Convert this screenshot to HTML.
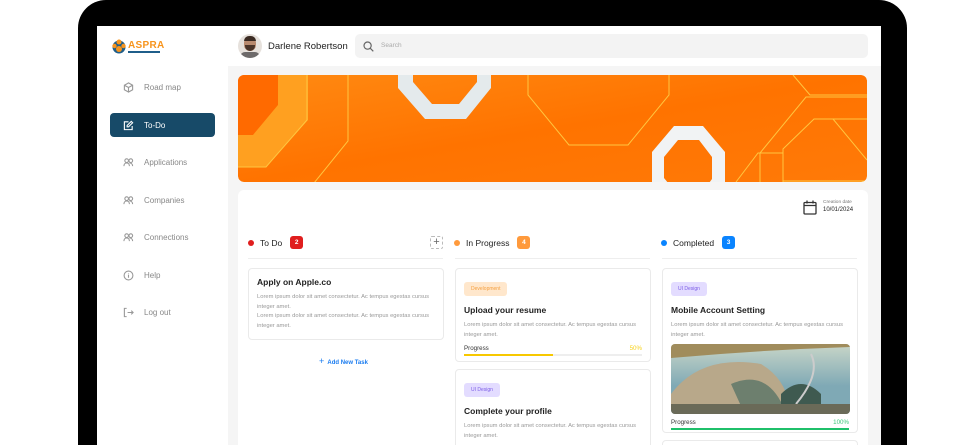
<!DOCTYPE html>
<html><head><meta charset="utf-8">
<style>
*{box-sizing:border-box;margin:0;padding:0}
html,body{width:978px;height:445px;overflow:hidden}
body{background:#fff;font-family:"Liberation Sans",sans-serif;position:relative}
.frame{position:absolute;left:78px;top:0;width:829px;height:445px;background:#000;border-radius:28px 28px 0 0}
.screen{position:absolute;left:97px;top:26px;width:784px;height:419px;background:#f5f5f5;overflow:hidden}
.side{position:absolute;left:0;top:0;width:131px;height:419px;background:#fff}
.nav{position:absolute;left:13px;width:105px;height:24px;border-radius:4px;font-size:8px;color:#888;display:flex;align-items:center;padding-left:13px}
.nav svg{width:11px;height:11px;margin-right:10px;stroke:#999;fill:none;stroke-width:1.2}
.nav.act{background:#174a68;color:#fff}
.nav.act svg{stroke:#fff}
.hdr{position:absolute;left:131px;top:0;width:653px;height:40px;background:#fff}
.board{position:absolute;left:141px;top:164px;width:630px;height:300px;background:#fff;border-radius:6px}
.colh{position:absolute;top:46px;font-size:8.5px;color:#222;display:flex;align-items:center}
.dot{width:6px;height:6px;border-radius:50%;margin-right:6px}
.badge{width:13px;height:13px;border-radius:3px;color:#fff;font-size:6.5px;display:flex;align-items:center;justify-content:center;margin-left:8px;font-weight:bold}
.line{position:absolute;top:68px;height:1px;background:#eee;width:195px}
.card{position:absolute;border:1px solid #eaeaea;border-radius:4px;background:#fff;width:196px;padding:8px}
.card h4{font-size:8.5px;color:#222;margin-bottom:6px}
.card p{font-size:5.8px;color:#999;line-height:9.6px}
.tag{display:inline-block;font-size:5px;padding:4px 7px;border-radius:3px;margin-bottom:9px}
.pg{display:flex;justify-content:space-between;font-size:6.2px;color:#333;margin-top:5px}
.bar{height:2px;background:#eee;margin-top:2px}
</style></head><body>
<div class="frame"></div>
<div class="screen">
 <div class="side">
  <svg style="position:absolute;left:14px;top:12px" width="16" height="16" viewBox="0 0 16 16"><circle cx="8" cy="9" r="6.5" fill="#1f5e8a"/><circle cx="8" cy="4" r="2.5" fill="#f7941d"/><circle cx="3.5" cy="8" r="2.2" fill="#f7941d"/><circle cx="12.5" cy="8" r="2.2" fill="#f7941d"/><circle cx="8" cy="11" r="3" fill="#f7941d"/></svg>
  <div style="position:absolute;left:31px;top:14px;font-size:10px;font-weight:bold;color:#f7941d;letter-spacing:.3px">ASPRA</div>
  <div style="position:absolute;left:31px;top:25px;width:32px;height:1.5px;background:#1f5e8a"></div>
  <div class="nav" style="top:49px"><svg viewBox="0 0 12 12"><path d="M6 1l4.5 2.5v5L6 11 1.5 8.5v-5z M1.5 3.5L6 6l4.5-2.5M6 6v5"/></svg>Road map</div>
  <div class="nav act" style="top:87px"><svg viewBox="0 0 12 12"><path d="M10 6.5V10.5H1.5V2H6M9 1.5l1.5 1.5L6 7.5H4.5V6z"/></svg>To-Do</div>
  <div class="nav" style="top:124px"><svg viewBox="0 0 12 12"><circle cx="4" cy="4" r="2"/><circle cx="8.5" cy="4" r="2"/><path d="M1 10c0-2.5 1.5-3.5 3-3.5s3 1 3 3.5M7 6.5c1.5 0 3.5.8 3.5 3.5"/></svg>Applications</div>
  <div class="nav" style="top:162px"><svg viewBox="0 0 12 12"><circle cx="4" cy="4" r="2"/><circle cx="8.5" cy="4" r="2"/><path d="M1 10c0-2.5 1.5-3.5 3-3.5s3 1 3 3.5M7 6.5c1.5 0 3.5.8 3.5 3.5"/></svg>Companies</div>
  <div class="nav" style="top:199px"><svg viewBox="0 0 12 12"><circle cx="4" cy="4" r="2"/><circle cx="8.5" cy="4" r="2"/><path d="M1 10c0-2.5 1.5-3.5 3-3.5s3 1 3 3.5M7 6.5c1.5 0 3.5.8 3.5 3.5"/></svg>Connections</div>
  <div class="nav" style="top:237px"><svg viewBox="0 0 12 12"><circle cx="6" cy="6" r="4.8"/><path d="M6 5v3.5M6 3.3v.5"/></svg>Help</div>
  <div class="nav" style="top:274px"><svg viewBox="0 0 12 12"><path d="M4 1.5H1.5v9H4M5 6h6M9 4l2 2-2 2"/></svg>Log out</div>
 </div>
 <div class="hdr">
  <div style="position:absolute;left:10px;top:8px;width:24px;height:24px;border-radius:50%;background:#e6e1dc;overflow:hidden"><div style="position:absolute;left:6px;top:3px;width:12px;height:14px;border-radius:6px;background:#b98a6e"></div><div style="position:absolute;left:6px;top:2px;width:12px;height:5px;border-radius:5px 5px 0 0;background:#3a2a22"></div><div style="position:absolute;left:7px;top:11px;width:10px;height:6px;border-radius:0 0 5px 5px;background:#4a3428"></div><div style="position:absolute;left:2px;top:18px;width:20px;height:10px;border-radius:8px;background:#6d6a6a"></div></div>
  <div style="position:absolute;left:40px;top:15px;font-size:9.5px;color:#222">Darlene Robertson</div>
  <div style="position:absolute;left:127px;top:8px;width:513px;height:24px;border-radius:5px;background:#f3f3f3"><svg style="position:absolute;left:8px;top:7px" width="11" height="11" viewBox="0 0 11 11" fill="none" stroke="#666" stroke-width="1.2"><circle cx="4.6" cy="4.6" r="3.6"/><path d="M7.3 7.3l3 3"/></svg><span style="position:absolute;left:26px;top:8px;font-size:6.5px;color:#aaa">Search</span></div>
 </div>
 <svg style="position:absolute;left:141px;top:49px;border-radius:6px" width="629" height="107" viewBox="0 0 629 107">
  <defs><linearGradient id="g" x1="0" y1="0" x2="1" y2="1"><stop offset="0" stop-color="#ff8a12"/><stop offset=".5" stop-color="#ff7300"/><stop offset="1" stop-color="#ff7a08"/></linearGradient></defs>
  <rect width="629" height="107" rx="6" fill="url(#g)"/>
  <path d="M0 0H40V30L15 60H0z" fill="#ff6a00"/>
  <path d="M40 0H70V45L28 92H0V60H15L40 30z" fill="#ffa020"/>
  <g fill="none" stroke="#ffc640" stroke-width="1">
   <path d="M69 0V45L28 92H0M110 0V66L55 134M290 0V20L331 70H390L431 20V0M555 0L572 20H629M629 22H568L522 78V107M545 107V74L576 44H629M498 107L520 78H545M545 106H629M595 44L629 85"/>
  </g>
  <path d="M160 0H253V13L228 44H187L160 13z M175 0V7L194 29H221L239 7V0z" fill="#e4eaec" fill-rule="evenodd"/>
  <path d="M436 51H465L487 77V107H414V77z M440 65L426 82V103L440 120H462L474 104V82L461 65z" fill="#f1f3f4" fill-rule="evenodd"/>
 </svg>
 <div class="board">
  <svg style="position:absolute;left:565px;top:10px" width="14" height="15" viewBox="0 0 14 15" fill="none" stroke="#333" stroke-width="1.3"><rect x="1" y="2.5" width="12" height="11.5" rx="1"/><path d="M1 5.5h12M4 0.5v3M10 0.5v3"/></svg>
  <div style="position:absolute;left:585px;top:10px;font-size:4.8px;color:#777">Creation date</div>
  <div style="position:absolute;left:585px;top:17px;font-size:6px;color:#222">10/01/2024</div>
  <div class="colh" style="left:10px"><div class="dot" style="background:#e01e1e"></div>To Do<div class="badge" style="background:#e01e1e">2</div></div>
  <div style="position:absolute;left:192px;top:46px;width:13px;height:13px;border:1px dashed #bbb;border-radius:2px;font-size:11px;color:#666;line-height:10px;text-align:center">+</div>
  <div class="colh" style="left:216px"><div class="dot" style="background:#ff9a3c"></div>In Progress<div class="badge" style="background:#ff9a3c">4</div></div>
  <div class="colh" style="left:423px"><div class="dot" style="background:#0a84ff"></div>Completed<div class="badge" style="background:#0a84ff">3</div></div>
  <div class="line" style="left:10px"></div><div class="line" style="left:217px"></div><div class="line" style="left:424px"></div>
  <div class="card" style="left:10px;top:78px;height:72px"><h4>Apply on Apple.co</h4><p>Lorem ipsum dolor sit amet consectetur. Ac tempus egestas cursus integer amet.<br>Lorem ipsum dolor sit amet consectetur. Ac tempus egestas cursus integer amet.</p></div>
  <div style="position:absolute;left:81px;top:166px;font-size:6px;color:#1a7cf0;font-weight:bold"><span style="font-size:9px;font-weight:normal">+</span>&nbsp; Add New Task</div>
  <div class="card" style="left:217px;top:78px;height:94px"><span class="tag" style="background:#ffe7cc;color:#f5a040">Development</span><h4>Upload your resume</h4><p>Lorem ipsum dolor sit amet consectetur. Ac tempus egestas cursus integer amet.</p><div class="pg"><span>Progress</span><span style="color:#f7d21c">50%</span></div><div class="bar"><div style="width:50%;height:2px;background:#f7c800"></div></div></div>
  <div class="card" style="left:217px;top:179px;height:130px"><span class="tag" style="background:#e3dcff;color:#7b5ce6">UI Design</span><h4>Complete your profile</h4><p>Lorem ipsum dolor sit amet consectetur. Ac tempus egestas cursus integer amet.</p><div style="height:20px;margin-top:5px;border-radius:4px;background:linear-gradient(90deg,#7fa0a0,#c8dcdc)"></div></div>
  <div class="card" style="left:424px;top:78px;height:165px"><span class="tag" style="background:#e3dcff;color:#7b5ce6">UI Design</span><h4>Mobile Account Setting</h4><p>Lorem ipsum dolor sit amet consectetur. Ac tempus egestas cursus integer amet.</p>
   <svg style="display:block;margin-top:4px;border-radius:4px" width="179" height="70" viewBox="0 0 179 70"><defs><linearGradient id="s" x1="0" y1="0" x2="0" y2="1"><stop offset="0" stop-color="#c9d6c8"/><stop offset=".6" stop-color="#7fa9b5"/></linearGradient></defs><rect width="179" height="70" fill="url(#s)"/><path d="M0 0H179V3Q90 6 0 14z" fill="#a08c5c"/><path d="M0 50Q30 10 90 20Q115 35 118 62H0z" fill="#b8a88a"/><path d="M60 40Q95 25 112 62H70z" fill="#6d7f6e"/><path d="M110 50Q130 30 150 50V62H110z" fill="#3f5a50"/><path d="M140 10Q150 30 125 60" stroke="#ccc" fill="none" stroke-width="2"/><rect y="60" width="179" height="10" fill="#6a6a58"/></svg>
   <div class="pg"><span>Progress</span><span style="color:#3cc87a">100%</span></div><div class="bar"><div style="width:100%;height:2px;background:#1fc06a"></div></div></div>
  <div class="card" style="left:424px;top:250px;height:60px"></div>
 </div>
</div>
</body></html>
